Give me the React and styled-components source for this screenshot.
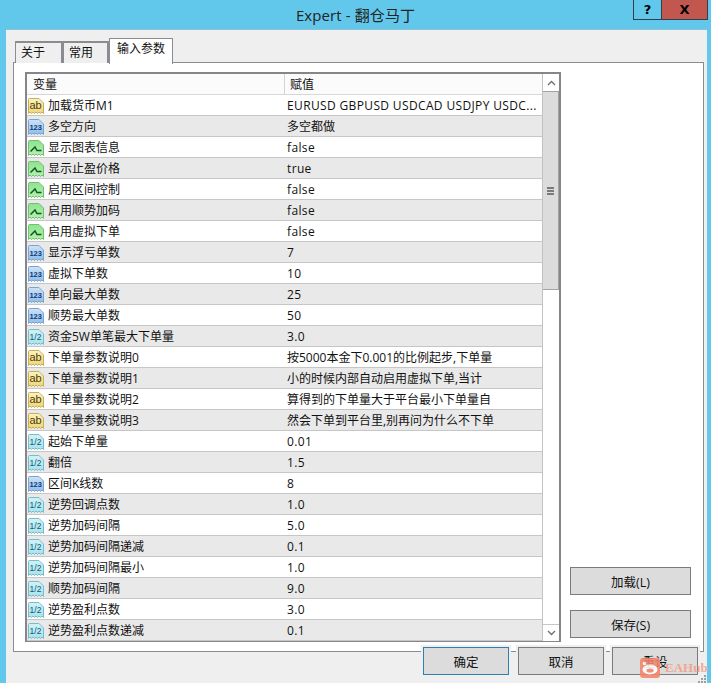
import React from 'react';
import styled, { createGlobalStyle } from 'styled-components';

const GlobalStyle = createGlobalStyle`
  html, body {
    margin: 0;
    padding: 0;
    background: #62c8eb;
  }
  * {
    box-sizing: border-box;
  }
`;

const FONT = '"Open Sans", "Noto Sans CJK SC", sans-serif';

const Window = styled.div`
  position: relative;
  width: 711px;
  height: 683px;
  overflow: hidden;
  background: #62c8eb;
  font-family: ${FONT};
  font-size: 12px;
  color: #111;
`;

const TitleBar = styled.div`
  position: relative;
  height: 29px;
  display: flex;
  justify-content: center;
  align-items: center;
  padding-bottom: 1px;
`;

const Title = styled.div`
  font-size: 15px;
  color: #222;
  letter-spacing: 0.1px;
`;

const Controls = styled.div`
  position: absolute;
  top: 0;
  right: 3px;
  display: flex;
  height: 20px;
  border: 1px solid #333f48;
  border-top: none;
`;

const ControlButton = styled.div`
  width: ${(p) => (p.$close ? '46px' : '27px')};
  background: ${(p) => (p.$close ? '#c1574f' : '#62c8eb')};
  border-left: ${(p) => (p.$close ? '1px solid #333f48' : 'none')};
  display: flex;
  align-items: center;
  justify-content: center;
  font-family: "DejaVu Sans", sans-serif;
  font-weight: 700;
  font-size: 13px;
  color: #000;
`;

const Client = styled.div`
  position: relative;
  margin: 0 4px 0 6px;
  height: 654px;
  background: #efefef;
  border-top: 1px solid #8fc1d3;
  padding: 8px 3px 0 7px;
`;

const TabRow = styled.div`
  display: flex;
  align-items: flex-end;
  height: 25px;
  padding-left: 2px;
  position: relative;
  z-index: 1;
`;

const Tab = styled.div`
  height: ${(p) => (p.$active ? '26px' : '22px')};
  width: ${(p) => p.$w}px;
  margin-bottom: ${(p) => (p.$active ? '-1px' : '0')};
  padding: ${(p) => (p.$active ? '2px 0 0 7px' : '2px 0 0 5px')};
  background: ${(p) => (p.$active ? '#fff' : '#efefef')};
  border-style: solid;
  border-color: #8b8c92;
  border-width: ${(p) => (p.$active ? '1px 1px 0' : '2px 2px 0 1px')};
  line-height: 16px;
  white-space: nowrap;
`;

const Panel = styled.div`
  height: 590px;
  margin-top: -1px;
  background: #fff;
  border: 1px solid #8b8c92;
  padding: 9px 0 0 11px;
  display: flex;
`;

const Grid = styled.div`
  width: 536px;
  height: 570px;
  border: 2px solid #85868c;
  border-bottom-width: 1px;
  background: #fff;
  display: flex;
  overflow: hidden;
`;

const GridBody = styled.div`
  width: 515px;
`;

const HeaderRow = styled.div`
  height: 21px;
  display: grid;
  grid-template-columns: 257px 1fr;
  background: #fbfbfb;
  border-bottom: 1px solid #d7d7d7;
`;

const HeaderCell = styled.div`
  padding: 1px 0 0 ${(p) => (p.$value ? '5px' : '6px')};
  line-height: 20px;
  border-left: ${(p) => (p.$value ? '1px solid #d4d4d4' : 'none')};
`;

const Row = styled.div`
  height: 21px;
  display: grid;
  grid-template-columns: 257px 1fr;
  background: ${(p) => (p.$alt ? '#e9e9e9' : '#fff')};
  border-bottom: 1px solid #c6c6c6;
`;

const NameCell = styled.div`
  display: flex;
  align-items: center;
  gap: 4px;
  white-space: nowrap;
  line-height: 20px;
  padding-top: 1px;
`;

const ValueCell = styled.div`
  padding: 1px 0 0 3px;
  line-height: 20px;
  white-space: nowrap;
  overflow: hidden;
  letter-spacing: ${(p) => (p.$latin ? '0.36px' : '0')};
`;

const Scrollbar = styled.div`
  width: 17px;
  margin-left: 0;
  display: flex;
  flex-direction: column;
  border-left: 1px solid #c2c2c2;
  background: #fff;
  height: 567px;
`;

const ScrollButton = styled.div`
  height: 17px;
  background: #fff;
  display: flex;
  align-items: center;
  justify-content: center;
  border-top: ${(p) => (p.$down ? '1px solid #c6c6c6' : 'none')};
`;

const ScrollThumb = styled.div`
  height: 199px;
  background: #dcdcdc;
  border: 1px solid #a3a3a3;
  border-left: none;
  display: flex;
  align-items: center;
  justify-content: center;
`;

const ScrollTrack = styled.div`
  flex: 1;
`;

const GripLines = styled.div`
  width: 7px;
  height: 8px;
  border-top: 2px solid #7a7a7a;
  border-bottom: 2px solid #7a7a7a;
  position: relative;
  &::after {
    content: '';
    position: absolute;
    left: 0;
    right: 0;
    top: 1px;
    height: 2px;
    background: #7a7a7a;
  }
`;

const SideColumn = styled.div`
  flex: 1;
  display: flex;
  flex-direction: column;
  align-items: flex-start;
  padding: 495px 0 0 9px;
  gap: 15px;
`;

const Button = styled.div`
  width: 86px;
  height: 28px;
  margin-right: ${(p) => p.$mr || 0}px;
  background: #dcdcdc;
  border: ${(p) => (p.$primary ? '1px solid #2f7fb5' : '1px solid #7b7b7b')};
  display: flex;
  align-items: center;
  justify-content: center;
  font-size: 12.5px;
  outline: 2px solid #efefef;
`;

const SideButton = styled(Button)`
  width: 121px;
  outline: none;
`;

const Footer = styled.div`
  display: flex;
  justify-content: flex-end;
  gap: 8px;
  margin-top: -5px;
  padding-right: 6px;
  position: relative;
`;

const Watermark = styled.div`
  position: absolute;
  left: 640px;
  top: 658px;
  display: flex;
  align-items: center;
  gap: 5px;
  color: #f3a08a;
  font-family: "Liberation Serif", serif;
  font-weight: 700;
  font-size: 13px;
  opacity: 0.88;
`;

const ResizeGrip = styled.svg`
  position: absolute;
  right: 4px;
  bottom: 0;
`;

const DOC = 'M0.5 1.5 Q0.5 0.5 1.5 0.5 H11 L15.5 5 V15.5 L14 14 L12.5 15.5 L11 14 L9.5 15.5 L8 14 L6.5 15.5 L5 14 L3.5 15.5 L2 14 L0.5 15.5 Z';

const palette = {
  ab: { top: '#fbf3c0', bottom: '#ecd67c', stroke: '#c9ae58', ink: '#4d3d08' },
  num: { top: '#cfe3f7', bottom: '#8fbbe8', stroke: '#7aa5d0', ink: '#0f3a78' },
  bool: { top: '#8fe38f', bottom: '#b6efb0', stroke: '#6fc06f', ink: '#0c5a22' },
  half: { top: '#d2f2f6', bottom: '#a8e2ec', stroke: '#77bccb', ink: '#0f5a72' },
};

const TypeIcon = ({ kind }) => {
  const c = palette[kind];
  return (
    <svg width="17" height="16" viewBox="-1 0 17 16" style={{ flexShrink: 0 }}>
      <defs>
        <linearGradient id={`doc-${kind}`} x1="0" y1="0" x2="0" y2="1">
          <stop offset="0" stopColor={c.top} />
          <stop offset="1" stopColor={c.bottom} />
        </linearGradient>
      </defs>
      <path d={DOC} fill={`url(#doc-${kind})`} stroke={c.stroke} strokeWidth="1" />
      {kind === 'ab' && (
        <text x="7.5" y="11" textAnchor="middle" fontSize="11" fontFamily="Liberation Sans" fill={c.ink}>ab</text>
      )}
      {kind === 'num' && (
        <text x="7.7" y="11" textAnchor="middle" fontSize="7.5" fontWeight="700" fontFamily="Liberation Sans" fill={c.ink}>123</text>
      )}
      {kind === 'half' && (
        <text x="7.5" y="11" textAnchor="middle" fontSize="8.5" fontFamily="Liberation Sans" fill={c.ink}>1/2</text>
      )}
      {kind === 'bool' && (
        <path d="M2.5 11.5 L7 7 L9 10.5 H13.5" fill="none" stroke={c.ink} strokeWidth="1.5" />
      )}
    </svg>
  );
};

const rows = [
  ['ab', '加载货币M1', 'EURUSD GBPUSD USDCAD USDJPY USDC...'],
  ['num', '多空方向', '多空都做'],
  ['bool', '显示图表信息', 'false'],
  ['bool', '显示止盈价格', 'true'],
  ['bool', '启用区间控制', 'false'],
  ['bool', '启用顺势加码', 'false'],
  ['bool', '启用虚拟下单', 'false'],
  ['num', '显示浮亏单数', '7'],
  ['num', '虚拟下单数', '10'],
  ['num', '单向最大单数', '25'],
  ['num', '顺势最大单数', '50'],
  ['half', '资金5W单笔最大下单量', '3.0'],
  ['ab', '下单量参数说明0', '按5000本金下0.001的比例起步,下单量'],
  ['ab', '下单量参数说明1', '小的时候内部自动启用虚拟下单,当计'],
  ['ab', '下单量参数说明2', '算得到的下单量大于平台最小下单量自'],
  ['ab', '下单量参数说明3', '然会下单到平台里,别再问为什么不下单'],
  ['half', '起始下单量', '0.01'],
  ['half', '翻倍', '1.5'],
  ['num', '区间K线数', '8'],
  ['half', '逆势回调点数', '1.0'],
  ['half', '逆势加码间隔', '5.0'],
  ['half', '逆势加码间隔递减', '0.1'],
  ['half', '逆势加码间隔最小', '1.0'],
  ['half', '顺势加码间隔', '9.0'],
  ['half', '逆势盈利点数', '3.0'],
  ['half', '逆势盈利点数递减', '0.1'],
];

const Chevron = ({ down }) => (
  <svg width="9" height="6" viewBox="0 0 9 6">
    <path d={down ? 'M1 1 L4.5 4.5 L8 1' : 'M1 5 L4.5 1.5 L8 5'} fill="none" stroke="#6e6e6e" strokeWidth="1.3" />
  </svg>
);

const App = () => (
  <Window>
    <GlobalStyle />
    <TitleBar>
      <Title>Expert - 翻仓马丁</Title>
      <Controls>
        <ControlButton>?</ControlButton>
        <ControlButton $close>X</ControlButton>
      </Controls>
    </TitleBar>
    <Client>
      <TabRow>
        <Tab $w={48}>关于</Tab>
        <Tab $w={46}>常用</Tab>
        <Tab $w={64} $active>输入参数</Tab>
      </TabRow>
      <Panel>
        <Grid>
          <GridBody>
            <HeaderRow>
              <HeaderCell>变量</HeaderCell>
              <HeaderCell $value>赋值</HeaderCell>
            </HeaderRow>
            {rows.map(([kind, name, value], i) => (
              <Row key={name} $alt={i % 2 === 1}>
                <NameCell>
                  <TypeIcon kind={kind} />
                  {name}
                </NameCell>
                <ValueCell $latin={/^[\x20-\x7e]+$/.test(value)}>{value}</ValueCell>
              </Row>
            ))}
          </GridBody>
          <Scrollbar>
            <ScrollButton><Chevron /></ScrollButton>
            <ScrollThumb><GripLines /></ScrollThumb>
            <ScrollTrack />
            <ScrollButton $down><Chevron down /></ScrollButton>
          </Scrollbar>
        </Grid>
        <SideColumn>
          <SideButton>加载(L)</SideButton>
          <SideButton>保存(S)</SideButton>
        </SideColumn>
      </Panel>
      <Footer>
        <Button $primary $mr={1}>确定</Button>
        <Button>取消</Button>
        <Button>重设</Button>
      </Footer>
    </Client>
    <Watermark>
      <svg width="20" height="20" viewBox="0 0 20 20">
        <rect width="20" height="20" rx="3" fill="#f2856a" />
        <ellipse cx="10" cy="11.5" rx="7.5" ry="5" fill="#fff" />
        <ellipse cx="10" cy="12.5" rx="3.6" ry="2" fill="#f2856a" />
        <circle cx="4.5" cy="5.5" r="1.8" fill="#fff" />
      </svg>
      EAHub
    </Watermark>
    <ResizeGrip width="10" height="9" viewBox="0 0 10 9">
      <g fill="#9aa0a4">
        <rect x="7" y="1" width="2" height="2" />
        <rect x="4" y="4" width="2" height="2" />
        <rect x="7" y="4" width="2" height="2" />
        <rect x="1" y="7" width="2" height="2" />
        <rect x="4" y="7" width="2" height="2" />
        <rect x="7" y="7" width="2" height="2" />
      </g>
    </ResizeGrip>
  </Window>
);

export default App;
